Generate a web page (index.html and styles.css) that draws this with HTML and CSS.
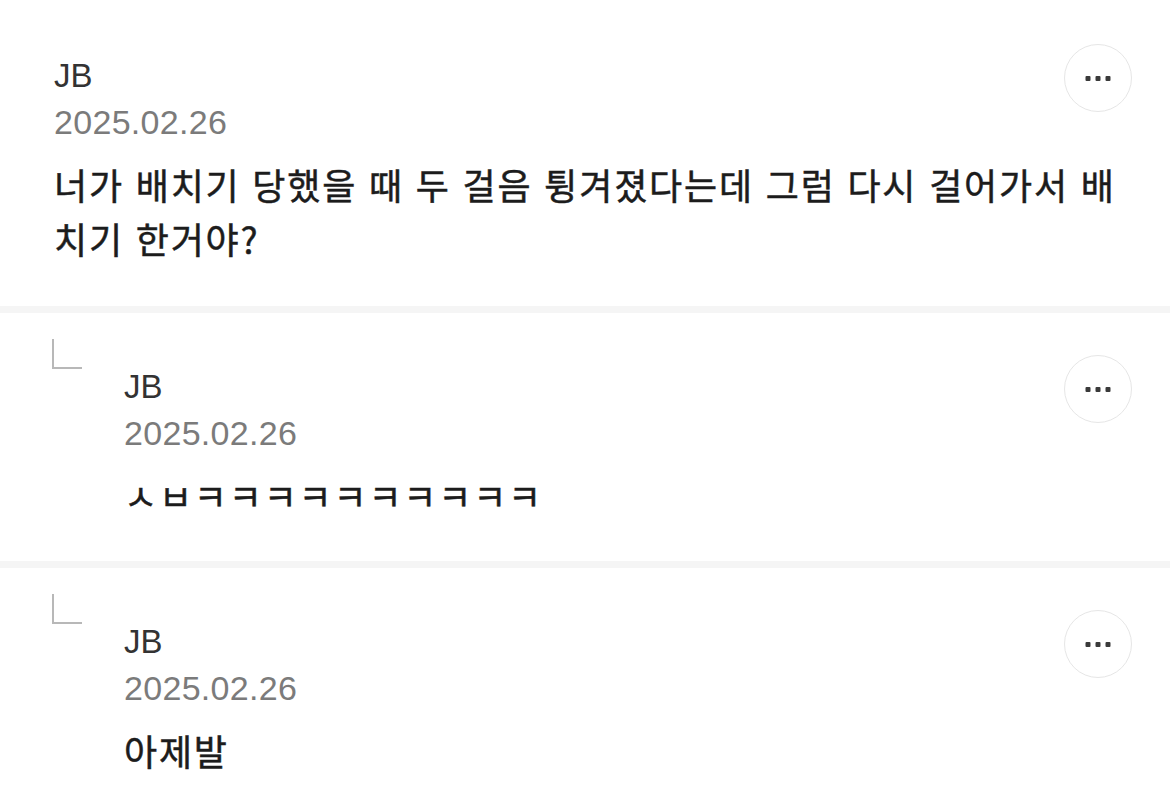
FILE: index.html
```html
<!DOCTYPE html>
<html lang="ko">

<head>
    <title>댓글</title>
    <meta charset="UTF-8">
    <meta name="viewport" content="width=device-width, initial-scale=1.0">
    <link rel="stylesheet" href="styles.css">
</head>

<body>
    <div class="comment-list">

        <div class="comment">
            <div class="comment-main">
                <div class="comment-head">
                    <div class="meta">
                        <div class="author">JB</div>
                        <div class="date">2025.02.26</div>
                    </div>
                    <button type="button" class="more" aria-label="더보기">
                        <svg width="26" height="7" viewBox="0 0 26 7">
                            <rect x="0.5" y="1" width="5" height="5" rx="1" />
                            <rect x="10.5" y="1" width="5" height="5" rx="1" />
                            <rect x="20.5" y="1" width="5" height="5" rx="1" />
                        </svg>
                    </button>
                </div>
                <p class="text">너가 배치기 당했을 때 두 걸음 튕겨졌다는데 그럼 다시 걸어가서 배치기 한거야?</p>
            </div>
        </div>

        <div class="comment reply">
            <span class="reply-mark"></span>
            <div class="comment-main">
                <div class="comment-head">
                    <div class="meta">
                        <div class="author">JB</div>
                        <div class="date">2025.02.26</div>
                    </div>
                    <button type="button" class="more" aria-label="더보기">
                        <svg width="26" height="7" viewBox="0 0 26 7">
                            <rect x="0.5" y="1" width="5" height="5" rx="1" />
                            <rect x="10.5" y="1" width="5" height="5" rx="1" />
                            <rect x="20.5" y="1" width="5" height="5" rx="1" />
                        </svg>
                    </button>
                </div>
                <p class="text">ㅅㅂㅋㅋㅋㅋㅋㅋㅋㅋㅋㅋ</p>
            </div>
        </div>

        <div class="comment reply">
            <span class="reply-mark"></span>
            <div class="comment-main">
                <div class="comment-head">
                    <div class="meta">
                        <div class="author">JB</div>
                        <div class="date">2025.02.26</div>
                    </div>
                    <button type="button" class="more" aria-label="더보기">
                        <svg width="26" height="7" viewBox="0 0 26 7">
                            <rect x="0.5" y="1" width="5" height="5" rx="1" />
                            <rect x="10.5" y="1" width="5" height="5" rx="1" />
                            <rect x="20.5" y="1" width="5" height="5" rx="1" />
                        </svg>
                    </button>
                </div>
                <p class="text">아제발</p>
            </div>
        </div>

    </div>
</body>

</html>
```

FILE: styles.css
```css
body {
    margin: 0;
    background: #fff;
    font-family: "Liberation Sans", "Noto Sans CJK KR", sans-serif;
}

.comment {
    display: flex;
    padding: 53px 38px 41px 54px;
    border-bottom: 7px solid #f5f5f5;
}

.comment-main {
    flex: 1;
}

.comment-head {
    display: flex;
    justify-content: space-between;
    align-items: flex-start;
}

.author {
    font-size: 33px;
    line-height: 46px;
    color: #333;
}

.date {
    font-size: 34px;
    line-height: 46px;
    letter-spacing: 0.3px;
    color: #7b7b7b;
}

.more {
    width: 68px;
    height: 68px;
    margin-top: -9px;
    padding: 0;
    border: 1.5px solid #e6e6e6;
    border-radius: 50%;
    background: #fff;
    display: flex;
    align-items: center;
    justify-content: center;
}

.more svg {
    fill: #3a3a3a;
}

.text {
    margin: 12px 0 0 0;
    padding-right: 4px;
    font-family: "Noto Sans CJK KR", sans-serif;
    font-size: 36px;
    line-height: 54px;
    letter-spacing: 1.8px;
    word-break: break-all;
    color: #1c1c1c;
    -webkit-text-stroke: 0.5px #1c1c1c; /* a touch heavier than regular */
}

/* replies */
.reply {
    padding-top: 26px;
    padding-bottom: 39px;
    padding-left: 52px;
}

.reply .comment-main {
    padding-top: 25px;
}

.reply-mark {
    width: 30px;
    height: 30px;
    margin-right: 42px;
    border-left: 2px solid #b8b8b8;
    border-bottom: 2px solid #b8b8b8;
    box-sizing: border-box;
}
```
